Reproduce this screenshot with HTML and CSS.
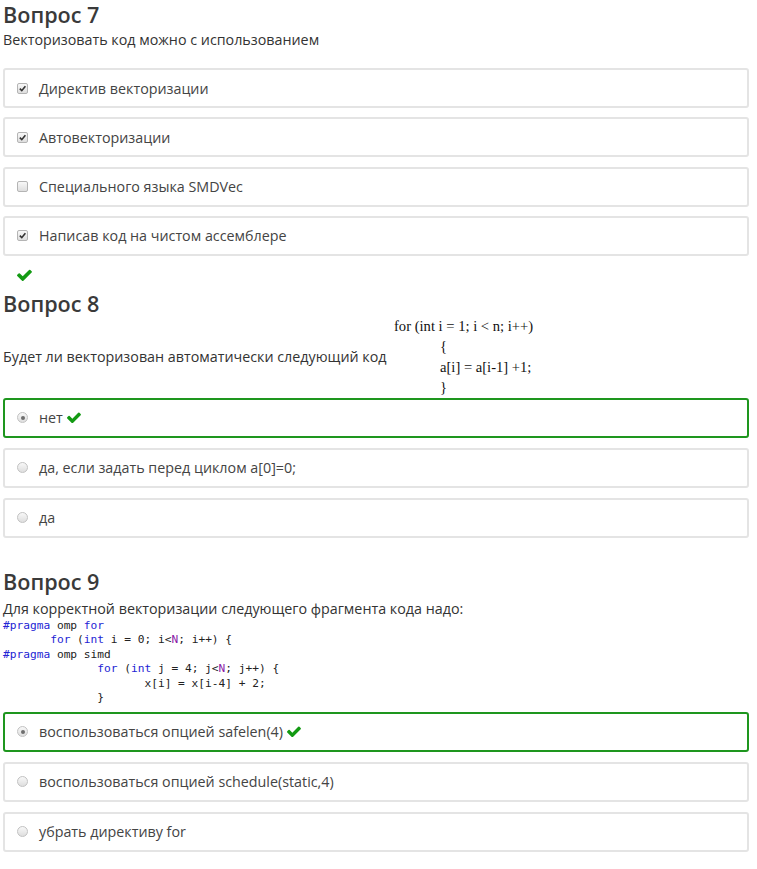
FILE: index.html
```html
<!DOCTYPE html>
<html lang="ru">
<head>
<meta charset="utf-8">
<title>Вопросы</title>
<link rel="stylesheet" href="styles.css">
</head>
<body>
<div class="page">
  <section class="q q7">
    <h2 class="q-title">Вопрос 7</h2>
    <p class="q-text">Векторизовать код можно с использованием</p>
    <div class="answers answers-tight">
      <div class="opt"><span class="cb checked"><svg viewBox="0 0 10 10"><path d="M2 5.2 L4.2 7.4 L8.2 2.4" /></svg></span><span class="label">Директив векторизации</span></div>
      <div class="opt"><span class="cb checked"><svg viewBox="0 0 10 10"><path d="M2 5.2 L4.2 7.4 L8.2 2.4" /></svg></span><span class="label">Автовекторизации</span></div>
      <div class="opt"><span class="cb"></span><span class="label">Специального языка SMDVec</span></div>
      <div class="opt"><span class="cb checked"><svg viewBox="0 0 10 10"><path d="M2 5.2 L4.2 7.4 L8.2 2.4" /></svg></span><span class="label">Написав код на чистом ассемблере</span></div>
    </div>
    <div class="mark"><svg class="ok ok-big" viewBox="120 330 1560 1110"><path d="M1671 566q0 40-28 68l-724 724-136 136q-28 28-68 28t-68-28l-136-136-362-362q-28-28-28-68t28-68l136-136q28-28 68-28t68 28l294 295 656-657q28-28 68-28t68 28l136 136q28 28 28 68z"/></svg></div>
  </section>

  <section class="q q8">
    <h2 class="q-title">Вопрос 8</h2>
    <div class="q8-row">
      <p class="q-text inline">Будет ли векторизован автоматически следующий код</p>
      <div class="serif-code">
        <div>for (int i = 1; i &lt; n; i++)</div>
        <div class="ind">{</div>
        <div class="ind">a[i] = a[i-1] +1;</div>
        <div class="ind">}</div>
      </div>
    </div>
    <div class="answers">
      <div class="opt correct"><span class="rb sel"></span><span class="label">нет <svg class="ok" viewBox="120 330 1560 1110"><path d="M1671 566q0 40-28 68l-724 724-136 136q-28 28-68 28t-68-28l-136-136-362-362q-28-28-28-68t28-68l136-136q28-28 68-28t68 28l294 295 656-657q28-28 68-28t68 28l136 136q28 28 28 68z"/></svg></span></div>
      <div class="opt"><span class="rb"></span><span class="label">да, если задать перед циклом a[0]=0;</span></div>
      <div class="opt"><span class="rb"></span><span class="label">да</span></div>
    </div>
  </section>

  <section class="q q9">
    <h2 class="q-title">Вопрос 9</h2>
    <p class="q-text">Для корректной векторизации следующего фрагмента кода надо:</p>
<pre class="mono-code"><span class="kw">#pragma</span> omp <span class="kw">for</span>
       <span class="kw">for</span> (<span class="kw">int</span> i = 0; i&lt;<span class="cn">N</span>; i++) {
<span class="kw">#pragma</span> omp simd
              <span class="kw">for</span> (<span class="kw">int</span> j = 4; j&lt;<span class="cn">N</span>; j++) {
                     x[i] = x[i-4] + 2;
              }</pre>
    <div class="answers">
      <div class="opt correct"><span class="rb sel"></span><span class="label">воспользоваться опцией safelen(4) <svg class="ok" viewBox="120 330 1560 1110"><path d="M1671 566q0 40-28 68l-724 724-136 136q-28 28-68 28t-68-28l-136-136-362-362q-28-28-28-68t28-68l136-136q28-28 68-28t68 28l294 295 656-657q28-28 68-28t68 28l136 136q28 28 28 68z"/></svg></span></div>
      <div class="opt"><span class="rb"></span><span class="label">воспользоваться опцией schedule(static,4)</span></div>
      <div class="opt"><span class="rb"></span><span class="label">убрать директиву for</span></div>
    </div>
  </section>
</div>
</body>
</html>
```
FILE: styles.css
```css
html, body {
  margin: 0;
  padding: 0;
  background: #fff;
}
body {
  font-family: "Open Sans", "Liberation Sans", sans-serif;
  color: #333;
}
.page {
  padding: 2px 8px 0 3px;
  width: 746px;
}
.q-title {
  font-size: 21.6px;
  line-height: 26px;
  font-weight: 600;
  color: #3a3a3a;
  margin: 0;
}
.q-text {
  font-size: 14.3px;
  line-height: 20px;
  margin: 2px 0 0;
  color: #333;
}
.answers {
  display: flex;
  flex-direction: column;
  gap: 10px;
}
.answers-tight {
  gap: 9.33px;
}
.q7 .answers {
  margin-top: 18px;
}
.opt {
  box-sizing: border-box;
  height: 40px;
  border: 2px solid #e4e4e4;
  border-radius: 3px;
  display: flex;
  align-items: center;
  padding: 0 12px;
  font-size: 14.3px;
  color: #444;
}
.opt.correct {
  border-color: #1e961e;
}
.label {
  margin-left: 11px;
  display: inline-flex;
  align-items: center;
  gap: 4px;
}
.cb, .rb {
  box-sizing: border-box;
  width: 11px;
  height: 11px;
  flex: none;
  border: 1px solid #b4b4b4;
  background: linear-gradient(#f8f8f8, #dedede);
  display: flex;
  align-items: center;
  justify-content: center;
}
.cb {
  border-radius: 2px;
}
.cb svg {
  width: 9px;
  height: 9px;
}
.cb svg path {
  fill: none;
  stroke: #333;
  stroke-width: 1.8;
}
.rb {
  border-radius: 50%;
  border-color: #c2c2c2;
}
.rb.sel::after {
  content: "";
  width: 4px;
  height: 4px;
  border-radius: 50%;
  background: #6e6e6e;
}
.ok {
  width: 14px;
  height: 11px;
  fill: #139a13;
}
.mark {
  margin: 13px 0 0 14px;
  height: 14px;
}
.ok-big {
  width: 15px;
  height: 12px;
  display: block;
}
.q8 .q-title {
  margin-top: 8px;
}
.q8-row {
  display: flex;
  align-items: center;
}
.q-text.inline {
  margin: 0;
  width: 391px;
}
.serif-code {
  font-family: "Liberation Serif", serif;
  font-size: 14.6px;
  line-height: 20.5px;
  color: #111;
  margin-top: -1px;
}
.serif-code .ind {
  padding-left: 46px;
}
.q9 .q-title {
  margin-top: 31px;
}
.q9 .q-text {
  margin-top: 4px;
}
.mono-code {
  font-family: "DejaVu Sans Mono", monospace;
  font-size: 11.2px;
  line-height: 14.5px;
  margin: 0 0 6px;
  color: #222;
}
.kw {
  color: #2323d4;
}
.cn {
  color: #8b1aa8;
}
```
